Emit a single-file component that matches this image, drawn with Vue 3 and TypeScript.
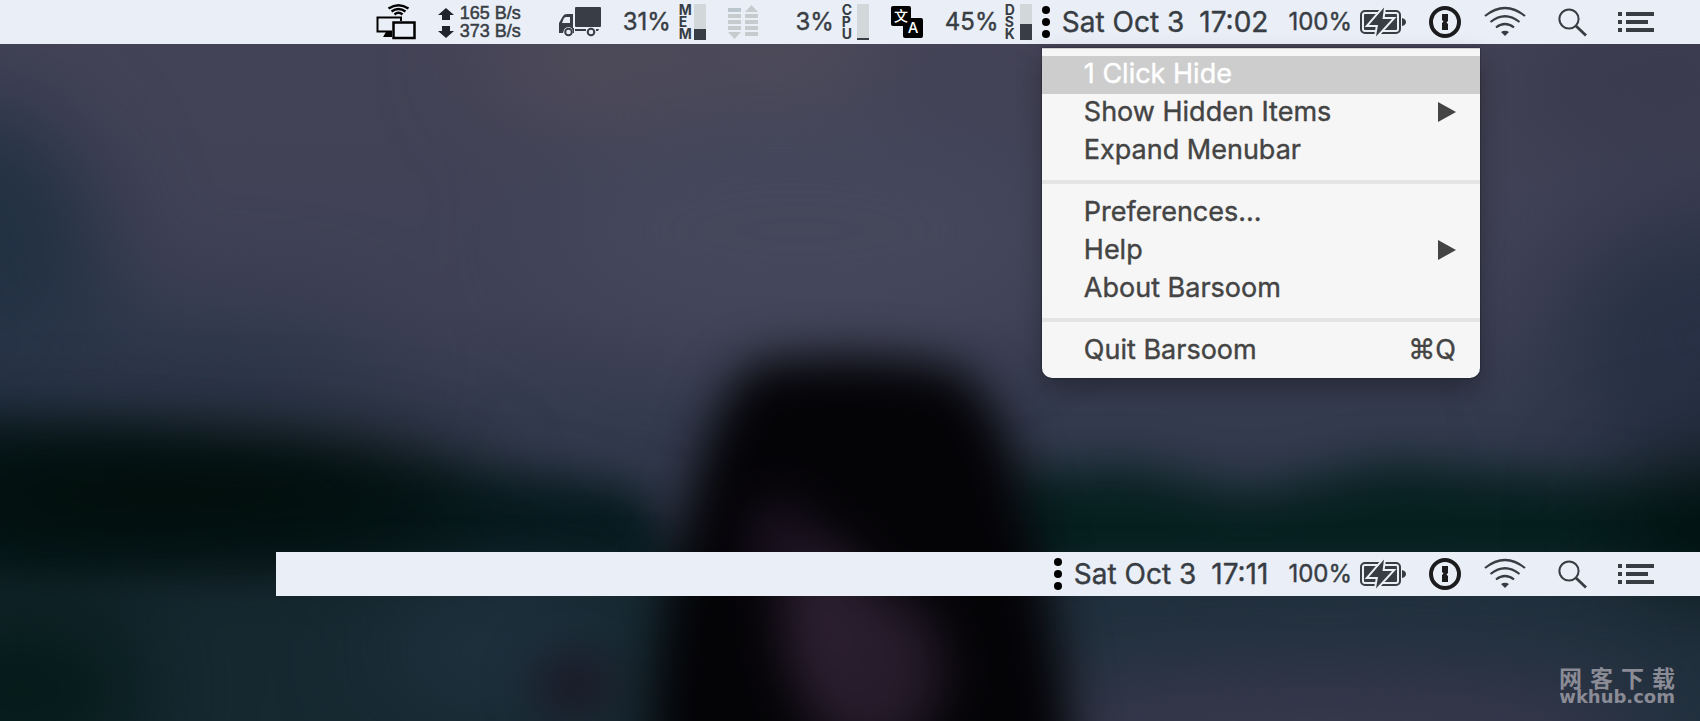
<script setup lang="ts">
interface Meter {
  name: string
  value: number
}

interface MenuEntry {
  label: string
  submenu?: boolean
  shortcut?: string
  active?: boolean
}

interface Bar {
  id: string
  time: string
  expanded: boolean
}

const bars: Bar[] = [
  { id: 'expanded', time: '17:02', expanded: true },
  { id: 'collapsed', time: '17:11', expanded: false },
]

const memory: Meter = { name: 'MEM', value: 31 }
const cpu: Meter = { name: 'CPU', value: 3 }
const disk: Meter = { name: 'DSK', value: 45 }

const fillHeight = (meter: Meter): string => Math.max(meter.value, 6) + '%'

const creditName = '网客下载'

const menu: MenuEntry[][] = [
  [
    { label: '1 Click Hide', active: true },
    { label: 'Show Hidden Items', submenu: true },
    { label: 'Expand Menubar' },
  ],
  [
    { label: 'Preferences...' },
    { label: 'Help', submenu: true },
    { label: 'About Barsoom' },
  ],
  [{ label: 'Quit Barsoom', shortcut: 'Q' }],
]
</script>

<template>
  <main class="desktop">
    <svg class="wallpaper" viewBox="0 0 1700 721" preserveAspectRatio="xMidYMid slice" aria-hidden="true">
      <defs>
        <linearGradient id="sky" x1="0" y1="0" x2="0" y2="1">
          <stop offset="0" stop-color="#444356" />
          <stop offset="0.42" stop-color="#3f4156" />
          <stop offset="0.58" stop-color="#343b4e" />
          <stop offset="1" stop-color="#2f3447" />
        </linearGradient>
        <filter id="soft" x="-50%" y="-50%" width="200%" height="200%" color-interpolation-filters="sRGB">
          <feGaussianBlur stdDeviation="24" />
        </filter>
        <filter id="softer" x="-80%" y="-80%" width="260%" height="260%" color-interpolation-filters="sRGB">
          <feGaussianBlur stdDeviation="50" />
        </filter>
      </defs>
      <rect width="1700" height="721" fill="url(#sky)" />
      <g filter="url(#softer)">
        <ellipse cx="-30" cy="300" rx="140" ry="200" fill="#213042" />
        <ellipse cx="150" cy="370" rx="240" ry="60" fill="#2c364a" />
        <ellipse cx="1720" cy="340" rx="170" ry="130" fill="#283145" />
        <ellipse cx="1660" cy="80" rx="150" ry="80" fill="#3a3a4e" />
        <ellipse cx="600" cy="60" rx="120" ry="40" fill="#544f5b" />
        <ellipse cx="790" cy="40" rx="90" ry="34" fill="#57525d" />
        <ellipse cx="800" cy="230" rx="260" ry="120" fill="#45475b" />
      </g>
      <g filter="url(#soft)">
        <path d="M-80 424 L120 428 L300 444 L460 466 L640 486 L700 600 L-80 600z" fill="#071a1e" />
        <path d="M1000 474 L1130 466 L1250 492 L1390 462 L1560 476 L1780 500 V590 H1000z" fill="#062020" />
      </g>
      <g filter="url(#soft)">
        <path d="M-80 580 L300 574 L760 570 V800 H-80z" fill="#162931" />
        <path d="M1000 580 L1780 576 V800 H1000z" fill="#20303d" />
      </g>
      <g filter="url(#softer)">
        <ellipse cx="170" cy="494" rx="300" ry="46" fill="#000a05" />
        <ellipse cx="20" cy="690" rx="130" ry="80" fill="#031a18" />
        <ellipse cx="500" cy="650" rx="120" ry="50" fill="#213341" />
        <ellipse cx="1320" cy="740" rx="340" ry="66" fill="#3b394e" />
        <ellipse cx="1740" cy="520" rx="130" ry="60" fill="#000f0d" />
      </g>
      <g filter="url(#soft)">
        <ellipse cx="575" cy="685" rx="42" ry="30" fill="#1b1826" />
        <path d="M750 365 Q860 348 962 370 Q1010 420 1022 490 Q1062 620 1076 800 H650 Q650 650 684 520 Q714 400 750 365z" fill="#040306" />
        <ellipse cx="870" cy="670" rx="74" ry="84" fill="#251b2a" />
        <ellipse cx="825" cy="620" rx="44" ry="80" fill="#2a1e2f" />
        <ellipse cx="780" cy="540" rx="34" ry="40" fill="#1b1221" />
      </g>
    </svg>

    <header v-for="bar in bars" :key="bar.id" class="bar" :class="bar.id">
      <div v-if="bar.expanded" class="modules">
        <button class="item" type="button" aria-label="Screen sharing">
          <svg width="40" height="36" viewBox="0 0 40 36" fill="none" stroke="#000" stroke-width="2">
            <path stroke-width="2.400" d="M12.500 4.600Q22.500 -2 32.500 4.600M15.500 7.500Q22.500 2.600 29.500 7.500M18.500 10.500Q22.500 7 26.500 10.500" />
            <path d="M16 27.500H1.500V13.500H25V17" />
            <path d="M10 28H16V33H7z" fill="#000" stroke="none" />
            <rect x="17.500" y="18.500" width="21" height="15.500" stroke-width="2.500" />
          </svg>
        </button>
        <button class="item network" type="button" aria-label="Network throughput">
          <svg width="16" height="36" viewBox="0 0 16 36" fill="#20242c">
            <path d="M8 4L16 11H12V16H4V11H0zM8 34L16 27H12V22H4V27H0z" />
          </svg>
          <span class="rates"><span>165 B/s</span><span>373 B/s</span></span>
        </button>
        <button class="item truck" type="button" aria-label="Deliveries">
          <svg width="42" height="30" viewBox="0 0 42 30" fill="#383d46">
            <rect x="16" y="0" width="26" height="20" rx="1" />
            <path fill-rule="evenodd" d="M0 26V16L4 9Q5 7 8 7H14V21H15V26H14Q14 20 9.500 20T4 26zM3 16H11V10H7Q5.500 10 4.800 11.500z" />
            <path d="M16 22H27V24H16zM37 22H40L39 24H37z" />
            <circle cx="9.500" cy="25" r="3.300" fill="none" stroke="#383d46" stroke-width="2" />
            <circle cx="32" cy="25" r="3.300" fill="none" stroke="#383d46" stroke-width="2" />
          </svg>
        </button>
        <button class="item meter memory" type="button">
          <span class="value">{{ memory.value }}%</span>
          <span class="letters"><span v-for="(c, i) in memory.name" :key="i">{{ c }}</span></span>
          <span class="gauge"><span class="fill" :style="{ height: fillHeight(memory) }"></span></span>
        </button>
        <button class="item activity" type="button" aria-label="Disk activity">
          <svg width="30" height="36" viewBox="0 0 30 36" fill="#c6cbce">
            <path d="M0 4H13V8H0z" fill="#bbc5cc" />
            <path d="M0 10H13V14H0zM0 16H13V20H0zM0 22H13V26H0zM0 28H13L6.500 35z" />
            <path d="M17 8H30L23.500 1zM17 10H30V14H17zM17 16H30V20H17zM17 22H30V26H17zM17 28H30V32H17z" />
          </svg>
        </button>
        <button class="item meter" type="button">
          <span class="value">{{ cpu.value }}%</span>
          <span class="letters"><span v-for="(c, i) in cpu.name" :key="i">{{ c }}</span></span>
          <span class="gauge"><span class="fill" :style="{ height: fillHeight(cpu) }"></span></span>
        </button>
        <button class="item" type="button" aria-label="Translate">
          <svg class="translate" width="32" height="32" viewBox="0 0 32 32">
            <rect width="20" height="20" rx="2" />
            <rect x="12" y="12" width="20" height="20" rx="2" />
            <text x="10" y="15" font-size="14">文</text>
            <text x="22" y="27" font-size="15">A</text>
          </svg>
        </button>
        <button class="item meter" type="button">
          <span class="value">{{ disk.value }}%</span>
          <span class="letters"><span v-for="(c, i) in disk.name" :key="i">{{ c }}</span></span>
          <span class="gauge"><span class="fill" :style="{ height: fillHeight(disk) }"></span></span>
        </button>
      </div>

      <div class="anchor">
        <button class="item" type="button" aria-label="Barsoom" :aria-expanded="bar.expanded">
          <svg width="8" height="32" viewBox="0 0 8 32">
            <circle cx="4" cy="4" r="4" /><circle cx="4" cy="16" r="4" /><circle cx="4" cy="28" r="4" />
          </svg>
        </button>
        <div v-if="bar.expanded" class="menu" role="menu">
          <div v-for="(group, g) in menu" :key="g" class="group" role="group">
            <button
              v-for="entry in group"
              :key="entry.label"
              class="entry"
              :class="{ active: entry.active }"
              type="button"
              role="menuitem"
            >
              <span>{{ entry.label }}</span>
              <svg v-if="entry.submenu" class="arrow" width="18" height="20" viewBox="0 0 18 20" aria-hidden="true">
                <path d="M0 0L18 10L0 20z" fill="#444" />
              </svg>
              <span v-if="entry.shortcut" class="shortcut"><span class="command">⌘</span>{{ entry.shortcut }}</span>
            </button>
          </div>
        </div>
      </div>

      <div class="status">
        <button class="item clock" type="button"><span>Sat Oct 3</span><span>{{ bar.time }}</span></button>
        <button class="item battery" type="button">
          <span class="value">100%</span>
          <svg width="46" height="32" viewBox="0 0 46 32" aria-hidden="true">
            <rect x="1" y="5" width="39" height="22" rx="4" fill="none" stroke="#383d44" stroke-width="2" />
            <rect x="4" y="8" width="33" height="16" rx="1" fill="#383d44" />
            <path d="M42 12Q46 13 46 16T42 20z" fill="#383d44" />
            <path d="M24 1.500L9 19H18L16 30.500L32 13H22.500z" fill="#383d44" stroke="#ebf0f7" stroke-width="4" paint-order="stroke" />
          </svg>
        </button>
        <button class="item" type="button" aria-label="Password manager">
          <svg width="32" height="32" viewBox="0 0 32 32">
            <circle cx="16" cy="16" r="14" fill="none" stroke="#1c1c1f" stroke-width="4" />
            <path d="M13 8H19V15L17.500 16.500L19 18V24H13V17L14.500 15.500L13 14z" fill="#1c1c1f" />
          </svg>
        </button>
        <button class="item" type="button" aria-label="Wi-Fi">
          <svg width="42" height="32" viewBox="0 0 42 32" fill="none" stroke="#383d44" stroke-width="2.200">
            <path d="M1 10Q21 -6 41 10M6.500 16Q21 4.500 35.500 16M12 21.500Q21 14.500 30 21.500" />
            <path d="M17 26Q21 23.500 25 26L21 30z" fill="#383d44" stroke="none" />
          </svg>
        </button>
        <button class="item search" type="button" aria-label="Search">
          <svg width="29" height="32" viewBox="0 0 29 32" fill="none" stroke="#383d44">
            <circle cx="11" cy="13" r="9.600" stroke-width="2" />
            <path d="M18 20L28 29.500" stroke-width="2.800" />
          </svg>
        </button>
        <button class="item" type="button" aria-label="Notification center">
          <svg width="36" height="20" viewBox="0 0 36 20" fill="#383d44">
            <path d="M0 0H4V4H0zM8 0H36V4H8zM0 8H4V12H0zM8 8H30V12H8zM0 16H4V20H0zM8 16H36V20H8z" />
          </svg>
        </button>
      </div>
    </header>

    <footer class="credit">
      <span class="credit-name"><span v-for="c in creditName" :key="c">{{ c }}</span></span>
      <span class="credit-site">wkhub.com</span>
    </footer>
  </main>
</template>

<style>
body {
  margin: 0;
  background: #2f3447;
}
</style>

<style scoped>
.desktop {
  position: relative;
  display: grid;
  grid-template-rows: 44px 1fr 44px 125px;
  min-height: 100vh;
  overflow: hidden;
  font-family: Inter, "Liberation Sans", "Noto Sans CJK SC", sans-serif;
  color: #383d44;
}

.wallpaper {
  position: absolute;
  inset: 0;
  width: 100%;
  height: 100%;
}

.bar {
  position: relative;
  display: flex;
  justify-content: flex-end;
  box-sizing: border-box;
  padding-right: 46px;
  background: #eaeff7;
}

.expanded {
  grid-row: 1;
  z-index: 2;
}

.collapsed {
  grid-row: 3;
  margin-left: 276px;
}

.item {
  display: flex;
  align-items: center;
  height: 44px;
  padding: 0;
  border: 0;
  background: none;
  color: inherit;
  font: inherit;
  white-space: nowrap;
}

.item svg {
  display: block;
  flex: none;
}

.modules {
  display: flex;
  gap: 22px;
  margin-right: 10px;
}

.network {
  gap: 6px;
}

.rates {
  display: flex;
  flex-direction: column;
  font-family: "Liberation Sans", sans-serif;
  font-size: 18px;
  line-height: 18px;
  -webkit-text-stroke: 0.5px #383d46;
}

.truck {
  margin-left: 16px;
}

.memory {
  margin-left: -4px;
}

.activity {
  margin-right: 2px;
}

.meter .value {
  width: 52px;
  margin-right: 8px;
  text-align: right;
}

.value {
  font-size: 24px;
  line-height: 28px;
  -webkit-text-stroke: 0.4px currentColor;
}

.letters {
  display: flex;
  flex-direction: column;
  width: 11px;
  margin-right: 4px;
  font-size: 14px;
  font-weight: 700;
  line-height: 12px;
  text-align: left;
}

.gauge {
  display: flex;
  align-items: flex-end;
  width: 12px;
  height: 36px;
  background: #d2d7da;
}

.fill {
  width: 100%;
  background: #383d46;
}

.translate text {
  fill: #fff;
  font-family: Inter, "Noto Sans CJK SC", sans-serif;
  font-weight: 500;
  text-anchor: middle;
}

.anchor {
  position: relative;
  margin-right: 12px;
}

.status {
  display: flex;
  gap: 23px;
}

.clock {
  gap: 15px;
  margin-right: -3px;
  font-size: 28px;
  -webkit-text-stroke: 0.4px currentColor;
}

.battery {
  gap: 8px;
}

.search {
  margin: 0 8px 0 9px;
}

.menu {
  position: absolute;
  top: 48px;
  left: 0;
  width: 438px;
  box-sizing: border-box;
  padding: 8px 0;
  border-radius: 0 0 10px 10px;
  background: #f6f6f6;
  box-shadow: inset 0 1px #d0d0d3, 0 0 2px rgba(0, 0, 0, 0.6), 0 12px 26px rgba(0, 0, 0, 0.3);
}

.group + .group::before {
  content: "";
  display: block;
  height: 4px;
  margin: 10px 0;
  background: #e4e4e4;
}

.entry {
  display: flex;
  align-items: center;
  justify-content: space-between;
  width: 100%;
  height: 38px;
  padding: 0 24px 2px 42px;
  border: 0;
  background: none;
  color: #444;
  font-family: inherit;
  font-size: 27px;
  line-height: 36px;
  -webkit-text-stroke: 0.4px currentColor;
}

.entry.active {
  background: #cdcdcd;
  color: #fff;
}

.shortcut {
  display: flex;
}

.command {
  font-family: "DejaVu Sans", sans-serif;
  font-size: 27px;
}

.credit {
  position: relative;
  grid-row: 4;
  display: flex;
  flex-direction: column;
  align-items: flex-end;
  justify-content: flex-end;
  padding: 0 25px 14px 0;
  color: #8b8b96;
  font-weight: 700;
  line-height: 20px;
}

.credit-name {
  display: flex;
  gap: 8px;
  font-family: "Noto Sans CJK SC", sans-serif;
  font-size: 23px;
}

.credit-site {
  font-family: "DejaVu Sans", sans-serif;
  font-size: 18px;
}
</style>
